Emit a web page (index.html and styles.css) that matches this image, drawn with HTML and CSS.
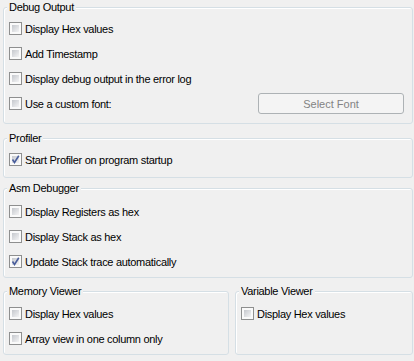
FILE: index.html
```html
<!DOCTYPE html>
<html lang="en">
<head>
  <meta charset="UTF-8" />
  <title>Debugger Options</title>
  <link rel="stylesheet" href="styles.css">
</head>
<body>
  <div class="page">
    <fieldset class="group debug">
      <legend>Debug Output</legend>
      <label class="row"><span class="box"></span>Display Hex values</label>
      <label class="row"><span class="box"></span>Add Timestamp</label>
      <label class="row"><span class="box"></span>Display debug output in the error log</label>
      <div class="row split">
        <label class="opt"><span class="box"></span>Use a custom font:</label>
        <button class="btn" disabled>Select Font</button>
      </div>
    </fieldset>

    <fieldset class="group profiler">
      <legend>Profiler</legend>
      <label class="row"><span class="box on"><svg viewBox="0 0 11 11"><path d="M2.5 5.5 L4.5 8.5 L8.8 1.8" fill="none" stroke="#4a5e9c" stroke-width="1.6"/></svg></span>Start Profiler on program startup</label>
    </fieldset>

    <fieldset class="group asm">
      <legend>Asm Debugger</legend>
      <label class="row"><span class="box"></span>Display Registers as hex</label>
      <label class="row"><span class="box"></span>Display Stack as hex</label>
      <label class="row"><span class="box on"><svg viewBox="0 0 11 11"><path d="M2.5 5.5 L4.5 8.5 L8.8 1.8" fill="none" stroke="#4a5e9c" stroke-width="1.6"/></svg></span>Update Stack trace automatically</label>
    </fieldset>

    <div class="pair">
      <fieldset class="group viewer memory">
        <legend>Memory Viewer</legend>
        <label class="row"><span class="box"></span>Display Hex values</label>
        <label class="row"><span class="box"></span>Array view in one column only</label>
      </fieldset>
      <fieldset class="group viewer variable">
        <legend>Variable Viewer</legend>
        <label class="row"><span class="box"></span>Display Hex values</label>
      </fieldset>
    </div>
  </div>
</body>
</html>
```

FILE: styles.css
```css
html, body {
  margin: 0;
  background: #f0f0f0;
}
body {
  font-family: "Liberation Sans", Arial, sans-serif;
  font-size: 11px;
  letter-spacing: -0.3px;
  color: #000;
}
.page {
  display: flex;
  flex-direction: column;
  padding: 0 1px 0 3px;
  width: 410px;
}
.group {
  margin: 0;
  min-width: 0;
  border: 1px solid #d5dfe5;
  border-radius: 3px;
  box-shadow: inset 1px 1px 0 #fff;
  padding: 2px 8px 7px 5px;
}
.group legend {
  padding: 0 2px;
  margin-left: -2px;
  line-height: 14px;
  background: #f0f0f0;
}
.profiler {
  margin-top: 7px;
  padding-top: 2px;
  padding-bottom: 5px;
}
.asm {
  margin-top: 3px;
  padding-top: 4px;
  padding-bottom: 3px;
}
.pair {
  display: flex;
  gap: 6px;
  margin-top: 6px;
}
.viewer {
  padding-top: 3px;
  padding-bottom: 3px;
  height: 71px;
  box-sizing: border-box;
}
.memory {
  width: 226px;
}
.variable {
  flex: 1;
}
.row {
  display: flex;
  align-items: center;
  height: 25px;
}
.split {
  justify-content: space-between;
}
.opt {
  display: flex;
  align-items: center;
}
.box {
  box-sizing: border-box;
  width: 13px;
  height: 13px;
  margin-right: 3px;
  border: 1px solid #8e8f8f;
  padding: 2px;
  background: linear-gradient(135deg, #c5c8cd, #f4f4f5) content-box, #fafafa;
  position: relative;
  flex: none;
}
.box svg {
  position: absolute;
  left: 0;
  top: 0;
  width: 11px;
  height: 11px;
}
.btn {
  width: 146px;
  height: 21px;
  margin: 0;
  padding: 0;
  font: inherit;
  color: #838383;
  background: #f4f4f4;
  border: 1px solid #adb2b5;
  border-radius: 3px;
}
```
